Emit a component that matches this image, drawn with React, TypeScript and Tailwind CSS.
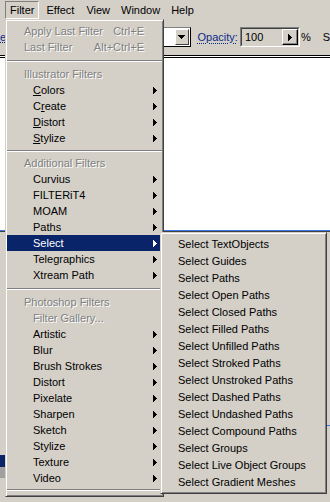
import React from "react";

const disabled = "text-[#808080] [text-shadow:1px_1px_0_#ffffff]";

const Tri = ({ color = "#000000" }: { color?: string }) => (
  <svg width="4" height="7" viewBox="0 0 4 7" shapeRendering="crispEdges" className="shrink-0">
    <rect x="0" y="0" width="1" height="7" fill={color} />
    <rect x="1" y="1" width="1" height="5" fill={color} />
    <rect x="2" y="2" width="1" height="3" fill={color} />
    <rect x="3" y="3" width="1" height="1" fill={color} />
  </svg>
);

const DownTri = () => (
  <svg width="7" height="4" viewBox="0 0 7 4" shapeRendering="crispEdges">
    <rect x="0" y="0" width="7" height="1" fill="#000" />
    <rect x="1" y="1" width="5" height="1" fill="#000" />
    <rect x="2" y="2" width="3" height="1" fill="#000" />
    <rect x="3" y="3" width="1" height="1" fill="#000" />
  </svg>
);

const Sep = ({ className }: { className: string }) => (
  <div className={`-mr-[2px] ${className}`}>
    <div className="h-[2px] border-t border-b border-t-[#808080] border-b-white" />
  </div>
);

const Header = ({ children }: { children: React.ReactNode }) => (
  <div className={`flex h-[16px] items-center pl-[17px] ${disabled}`}>{children}</div>
);

const Disabled = ({ label, shortcut }: { label: string; shortcut: string }) => (
  <div className={`flex h-[16px] items-center justify-between pl-[17px] pr-[16px] ${disabled}`}>
    <span>{label}</span>
    <span>{shortcut}</span>
  </div>
);

const Item = ({ children, active }: { children: React.ReactNode; active?: boolean }) => (
  <div
    className={`flex h-[16px] items-center justify-between pl-[26px] pr-[3px] ${
      active ? "bg-[#0a246a] text-white" : "text-black"
    }`}
  >
    <span>{children}</span>
    <Tri color={active ? "#ffffff" : "#000000"} />
  </div>
);

const selectItems = [
  "Select TextObjects",
  "Select Guides",
  "Select Paths",
  "Select Open Paths",
  "Select Closed Paths",
  "Select Filled Paths",
  "Select Unfilled Paths",
  "Select Stroked Paths",
  "Select Unstroked Paths",
  "Select Dashed Paths",
  "Select Undashed Paths",
  "Select Compound Paths",
  "Select Groups",
  "Select Live Object Groups",
  "Select Gradient Meshes",
];

export default function App() {
  return (
    <div className="relative h-[502px] w-[330px] overflow-hidden bg-[#d4d0c8] font-['Liberation_Sans',Arial,sans-serif] text-[11px] leading-none text-black">
      {/* menu bar */}
      <div className="flex h-[19px] items-start gap-[2px] pl-[5px] pt-[1px]">
        <div className="flex h-[18px] items-center border border-t-[#808080] border-l-[#808080] border-b-white border-r-white px-[4px]">
          Filter
        </div>
        <div className="flex h-[18px] items-center border border-transparent px-[4px]">Effect</div>
        <div className="flex h-[18px] items-center border border-transparent px-[4px]">View</div>
        <div className="flex h-[18px] items-center border border-transparent px-[3px]">Window</div>
        <div className="flex h-[18px] items-center border border-transparent px-[4px]">Help</div>
      </div>

      {/* control bar */}
      <div className="flex h-[36px] items-center">
        <span className="w-[6px] text-[#0a2a8a] underline decoration-dotted">e</span>
        <div className="ml-[104px] flex h-[20px] w-[82px] border border-t-[#808080] border-l-[#808080] border-b-black border-r-black bg-white">
          <div className="flex-1" />
          <div className="my-[1px] mr-[1px] flex w-[14px] items-center justify-center border border-t-white border-l-white border-b-[#404040] border-r-[#404040] bg-[#d4d0c8]">
            <DownTri />
          </div>
        </div>
        <span className="ml-[7px] text-[#0a2a8a] underline decoration-dotted underline-offset-2">Opacity:</span>
        <div className="ml-[2px] flex h-[20px] w-[61px] border border-t-[#808080] border-l-[#808080] border-b-white border-r-white bg-[#d4d0c8]">
          <div className="flex flex-1 items-center justify-between border border-t-[#404040] border-l-[#404040] border-b-[#d4d0c8] border-r-[#d4d0c8]">
            <span className="pl-[3px]">100</span>
            <div className="flex h-[16px] w-[16px] items-center justify-center border border-t-white border-l-white border-b-black border-r-black shadow-[inset_-1px_-1px_0_#808080]">
              <Tri />
            </div>
          </div>
        </div>
        <span className="ml-[1px]">%</span>
        <span className="ml-[12px]">S</span>
      </div>

      {/* document area */}
      <div className="h-[1px] bg-black" />
      <div className="h-[1px] bg-white" />
      <div className="h-[1px] bg-black" />
      <div className="h-[172px] bg-white" />
      <div className="h-[1px] bg-[#3b78e6]" />
      <div className="h-[1px] bg-[#404040]" />
      <div className="flex h-[270px] justify-between">
        <div className="flex w-[5px] flex-col pt-[223px]">
          <div className="h-[12px] bg-[#0a246a]" />
          <div className="h-[11px] bg-[#a0a0a0]" />
        </div>
        <div className="w-[3px] pt-[193px]">
          <div className="h-[1px] bg-[#3b78e6]" />
        </div>
      </div>

      {/* Filter menu */}
      <div className="absolute left-[5px] top-[19px] w-[159px] border border-t-[#d4d0c8] border-l-[#d4d0c8] border-b-[#404040] border-r-[#404040] bg-[#d4d0c8] pb-[2px] pl-[1px] pr-[3px] pt-[3px] shadow-[inset_1px_1px_0_#ffffff,inset_-1px_-1px_0_#808080]">
        <Disabled label="Apply Last Filter" shortcut="Ctrl+E" />
        <Disabled label="Last Filter" shortcut="Alt+Ctrl+E" />
        <Sep className="h-[11px] pt-[5px]" />
        <Header>Illustrator Filters</Header>
        <Item>
          <u>C</u>olors
        </Item>
        <Item>
          C<u>r</u>eate
        </Item>
        <Item>
          <u>D</u>istort
        </Item>
        <Item>
          <u>S</u>tylize
        </Item>
        <Sep className="h-[9px] pt-[4px]" />
        <Header>Additional Filters</Header>
        <Item>Curvius</Item>
        <Item>FILTERiT4</Item>
        <Item>MOAM</Item>
        <Item>Paths</Item>
        <Item active>Select</Item>
        <Item>Telegraphics</Item>
        <Item>Xtream Path</Item>
        <Sep className="h-[11px] pt-[5px]" />
        <Header>Photoshop Filters</Header>
        <div className={`flex h-[16px] items-center pl-[26px] ${disabled}`}>Filter Gallery...</div>
        <Item>Artistic</Item>
        <Item>Blur</Item>
        <Item>Brush Strokes</Item>
        <Item>Distort</Item>
        <Item>Pixelate</Item>
        <Item>Sharpen</Item>
        <Item>Sketch</Item>
        <Item>Stylize</Item>
        <Item>Texture</Item>
        <Item>Video</Item>
        <Sep className="h-[8px] pt-[3px]" />
      </div>

      {/* Select submenu */}
      <div className="absolute left-[160px] top-[232px] w-[167px] border border-t-[#d4d0c8] border-l-[#d4d0c8] border-b-[#404040] border-r-[#404040] bg-[#d4d0c8] pb-[2px] pl-[1px] pr-[1px] pt-[3px] shadow-[inset_1px_1px_0_#ffffff,inset_-1px_-1px_0_#808080]">
        {selectItems.map((s) => (
          <div key={s} className="flex h-[17px] items-center pl-[16px]">
            {s}
          </div>
        ))}
      </div>
    </div>
  );
}
